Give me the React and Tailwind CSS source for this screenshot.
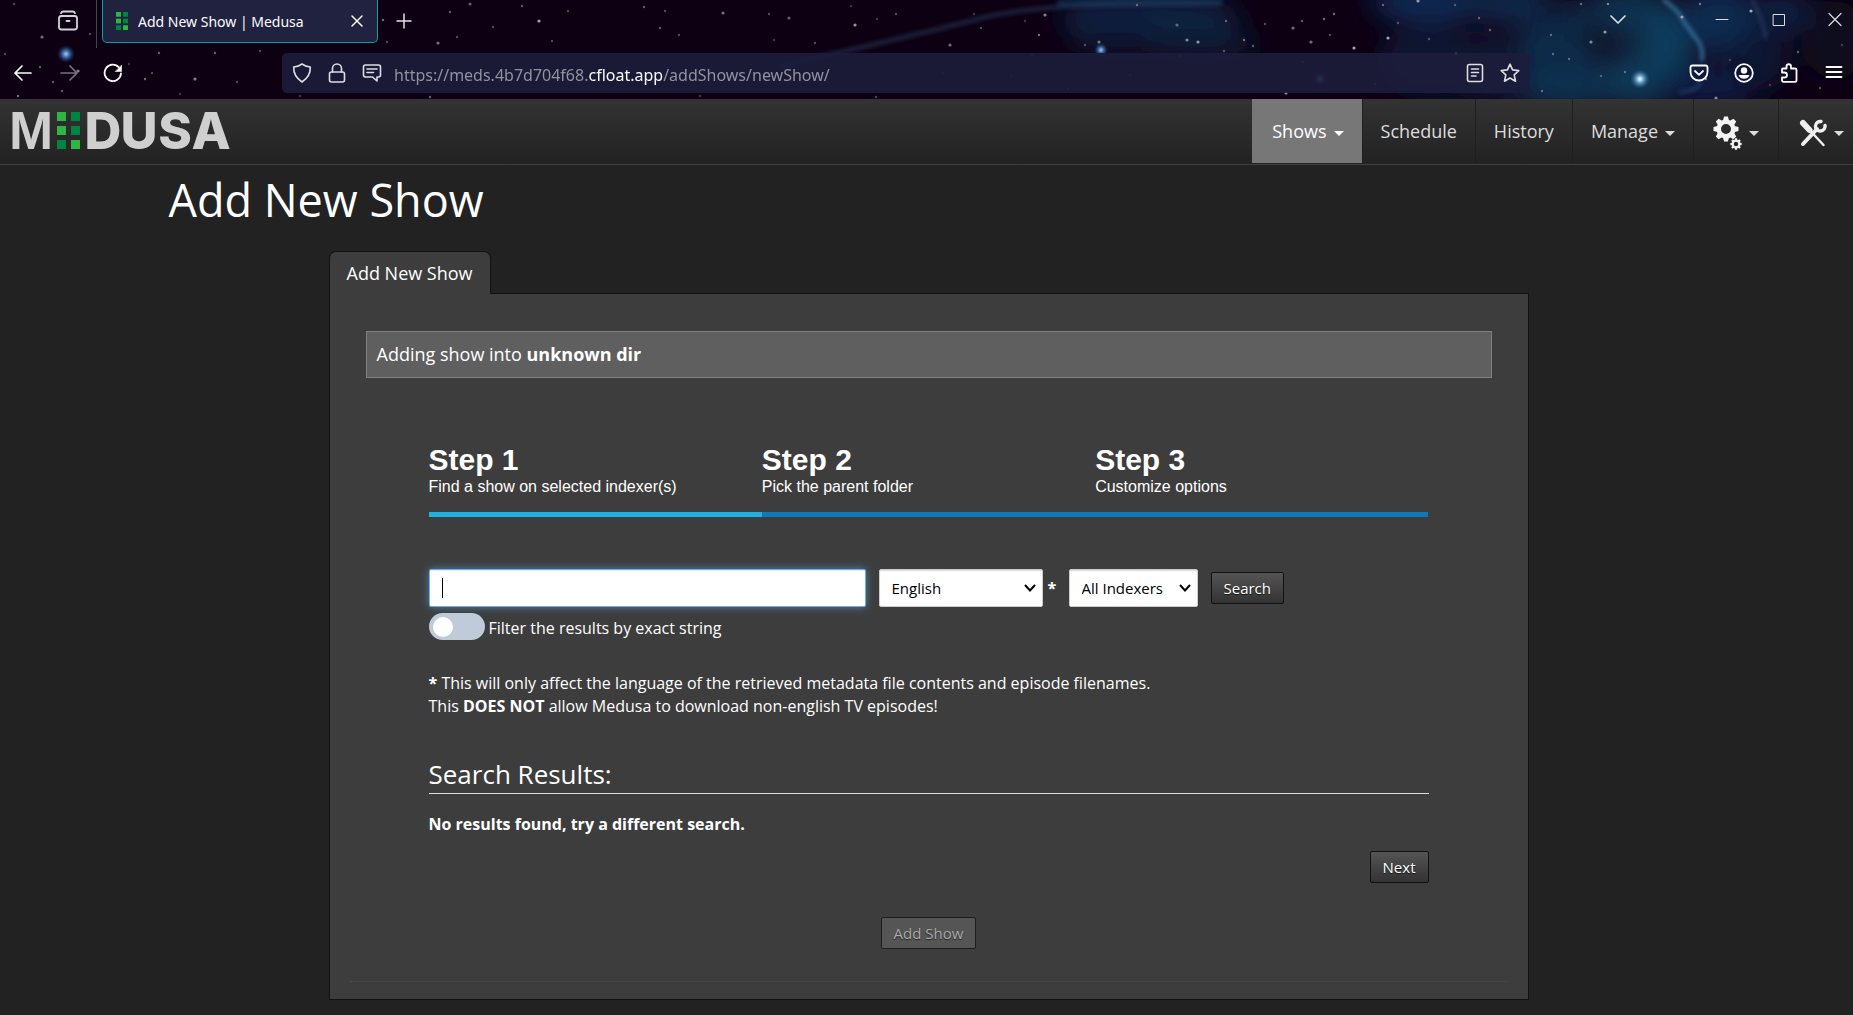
import React from "react";

const STARS = [
  [5, 54, 1, 0.4], [42, 37, 2, 0.6], [53, 82, 1, 0.5], [14, 4, 1, 0.4], [78, 71, 2, 0.7], [90, 34, 1, 0.4],
  [62, 91, 1, 0.5], [18, 96, 1, 0.6], [40, 67, 1, 0.5], [145, 79, 1, 0.6], [129, 64, 1, 0.3], [159, 53, 1, 0.5],
  [152, 73, 1, 0.4], [195, 79, 2, 0.7], [215, 53, 1, 0.5], [237, 82, 1, 0.4], [260, 51, 1, 0.4], [180, 94, 1, 0.3],
  [383, 20, 1, 0.6], [387, 42, 1, 0.4], [438, 43, 2, 0.6], [450, 12, 1, 0.5], [470, 4, 2, 0.5], [457, 37, 1, 0.4],
  [430, 97, 1, 0.5], [539, 21, 2, 0.9], [522, 6, 1, 0.5], [568, 11, 1, 0.4], [493, 27, 1, 0.4], [552, 41, 1, 0.4],
  [644, 7, 1, 0.5], [665, 11, 1, 0.4], [660, 28, 1, 0.5], [679, 35, 1, 0.4], [723, 13, 2, 0.6], [769, 14, 1, 0.4],
  [789, 18, 2, 0.5], [774, 40, 1, 0.3], [815, 43, 1, 0.4], [855, 25, 2, 0.8], [896, 14, 1, 0.4], [851, 6, 1, 0.3],
  [877, 19, 1, 0.3], [950, 45, 2, 0.6], [981, 28, 1, 0.4], [974, 14, 1, 0.3], [1025, 21, 1, 0.3], [1045, 15, 2, 0.7],
  [1039, 35, 1, 0.6], [1032, 55, 1, 0.4], [1085, 45, 1, 0.4], [1099, 42, 2, 0.6], [1137, 5, 1, 0.5], [1177, 25, 2, 0.5],
  [1187, 40, 2, 0.7], [1198, 42, 2, 0.8], [1226, 21, 1, 0.5], [1224, 51, 1, 0.4], [1011, 76, 1, 0.3], [1130, 75, 1, 0.4],
  [1068, 89, 1, 0.4], [943, 73, 1, 0.3], [1180, 56, 1, 0.4], [1244, 40, 1, 0.6], [1253, 46, 1, 0.5], [1265, 24, 1, 0.4],
  [1293, 28, 2, 0.6], [1302, 21, 1, 0.5], [1324, 19, 1, 0.6], [1334, 14, 1, 0.6], [1311, 42, 2, 0.6], [1330, 35, 1, 0.4],
  [1354, 48, 2, 0.9], [1388, 38, 2, 0.9], [1303, 62, 1, 0.5], [1286, 93, 2, 0.8], [1375, 84, 1, 0.6], [1383, 5, 1, 0.5],
  [1418, 1, 2, 0.8], [1456, 54, 2, 0.8], [1479, 18, 1, 0.5], [1490, 30, 1, 0.5], [1455, 5, 1, 0.4], [1398, 23, 1, 0.4],
  [1429, 39, 1, 0.4], [1551, 35, 1, 0.5], [1553, 54, 1, 0.5], [1569, 59, 1, 0.5], [1591, 42, 2, 0.7], [1605, 32, 2, 0.8],
  [1581, 4, 1, 0.5], [1608, 4, 1, 0.7], [1625, 72, 1, 0.5], [1542, 91, 1, 0.5], [1601, 76, 1, 0.4], [1682, 17, 2, 0.8],
  [1700, 4, 1, 0.6], [1751, 11, 2, 0.9], [1798, 52, 1, 0.5], [1706, 79, 1, 0.7], [1716, 98, 2, 0.7], [1730, 60, 1, 0.3],
  [1820, 88, 1, 0.4], [1842, 45, 1, 0.3], [1770, 85, 1, 0.3], [300, 96, 1, 0.3], [700, 96, 1, 0.3], [876, 97, 1, 0.4],
];

const CLOUDS = [
  [1150, 18, 90, 24, "#0d2140"], [1120, 40, 50, 14, "#0b1730"], [1200, 44, 60, 14, "#0b1a34"],
  [1430, 2, 60, 20, "#102c54"], [1430, 60, 50, 34, "#0d1530"], [1510, 4, 50, 18, "#0f2a4e"],
  [1500, 70, 60, 34, "#0c1630"], [1560, 50, 40, 50, "#0f2c4a"], [1570, 90, 50, 20, "#0e3050"],
  [1630, 14, 50, 26, "#0e3050"], [1640, 78, 40, 30, "#0f3854"], [1668, 45, 26, 36, "#103c5c"],
  [1720, 20, 40, 34, "#0e2a50"], [1780, 12, 34, 24, "#0d1c3c"], [1710, 86, 50, 20, "#101a44"],
  [1760, 60, 30, 30, "#0c1230"], [1594, 32, 16, 14, "#0b1228"], [1550, 12, 14, 12, "#0a1026"],
  [1835, 40, 30, 40, "#0d0a1e"],
];

function Nebula() {
  return (
    <svg className="absolute inset-0 h-full w-full" viewBox="0 0 1853 99" preserveAspectRatio="none" aria-hidden="true">
      <defs>
        <filter id="soft" x="-50%" y="-50%" width="200%" height="200%"><feGaussianBlur stdDeviation="13" /></filter>
        <filter id="wisp" x="-20%" y="-50%" width="140%" height="200%"><feGaussianBlur stdDeviation="2" /></filter>
        <radialGradient id="glow"><stop offset="0" stopColor="#fff" /><stop offset="0.25" stopColor="#8fc4e8" /><stop offset="1" stopColor="#1d5b86" stopOpacity="0" /></radialGradient>
        <radialGradient id="glowDim"><stop offset="0" stopColor="#a9c8f0" /><stop offset="0.3" stopColor="#4f7fbb" /><stop offset="1" stopColor="#123a70" stopOpacity="0" /></radialGradient>
      </defs>
      <rect width="1853" height="99" fill="#0e0013" />
      <g filter="url(#soft)">
        {CLOUDS.map(([x, y, rx, ry, fill]) => (
          <ellipse key={`${x}-${y}`} cx={x} cy={y} rx={rx} ry={ry} fill={fill} />
        ))}
      </g>
      <g filter="url(#wisp)" fill="none" strokeLinecap="round">
        <path d="M780 66 L850 50 L930 31 L990 16 Q1040 6 1110 5 L1220 4" stroke="#1f2f50" strokeWidth="4" opacity="0.8" />
        <path d="M1060 3 L1220 1" stroke="#173a62" strokeWidth="6" opacity="0.6" />
        <path d="M1664 0 Q1680 12 1684 22 L1695 37 Q1704 46 1702 60" stroke="#3f76a4" strokeWidth="3" />
        <path d="M1752 0 Q1762 16 1766 38" stroke="#3b4a6a" strokeWidth="3" opacity="0.6" />
        <path d="M1680 92 Q1700 90 1700 82" stroke="#33608c" strokeWidth="2" opacity="0.7" />
      </g>
      {STARS.map(([x, y, r, o]) => (
        <circle key={`${x}-${y}`} cx={x} cy={y} r={r === 2 ? 1.6 : 1.2} fill="#b9b3c6" opacity={o} />
      ))}
      <circle cx="66" cy="54" r="9" fill="url(#glowDim)" />
      <circle cx="1101" cy="50" r="7" fill="url(#glowDim)" />
      <circle cx="1320" cy="79" r="7" fill="url(#glowDim)" />
      <circle cx="1640" cy="79" r="10" fill="url(#glow)" />
    </svg>
  );
}

function Ico({ children, className = "h-5 w-5", box = "0 0 20 20", w = 1.6 }) {
  return (
    <svg className={`${className} shrink-0`} viewBox={box} fill="none" stroke="currentColor" strokeWidth={w} strokeLinecap="round" strokeLinejoin="round" aria-hidden="true">
      {children}
    </svg>
  );
}

function Squares({ className }) {
  return (
    <svg className={className} viewBox="0 0 24 38" preserveAspectRatio="none" aria-hidden="true">
      <rect x="0" y="0" width="10" height="10" fill="#2db742" />
      <rect x="14" y="0" width="10" height="10" fill="#008541" />
      <rect x="0" y="14" width="10" height="10" fill="#2db742" />
      <rect x="14" y="14" width="10" height="10" fill="#008541" />
      <rect x="0" y="28" width="10" height="10" fill="#008541" />
      <rect x="14" y="28" width="10" height="10" fill="#2db742" />
    </svg>
  );
}

function BrowserChrome() {
  return (
    <header className="relative h-[99px] overflow-hidden bg-[#0e0013] font-['Noto_Sans',sans-serif] text-[#fbfbfe]">
      <Nebula />
      <div className="relative flex h-12 items-start">
        <button aria-label="View recent browsing" className="ml-[57px] mt-[10px] text-[#d5d2d9]">
          <Ico className="h-[22px] w-[22px]" box="0 0 22 22" w={1.8}>
            <path d="M4 3.2 Q4.500 1.500 6.500 1.500 H15.500 Q17.500 1.500 18 3.200" />
            <rect x="2" y="6" width="18" height="13.500" rx="2.500" />
            <path d="M9.500 11 H12.500" />
          </Ico>
        </button>
        <div className="ml-[17px] h-12 w-px bg-[#4a4453]" />
        <div className="ml-[5px] flex h-[43px] w-[276px] items-center rounded-b-[5px] border border-t-0 border-[#00a3a3] bg-[#20223f] pl-[13px] pr-[10px]">
          <Squares className="h-[18px] w-3" />
          <span className="ml-[10px] flex-1 whitespace-nowrap text-[14px]">Add New Show | Medusa</span>
          <button aria-label="Close tab">
            <Ico className="h-5 w-5" w={1.5}><path d="M5 5 L15 15 M15 5 L5 15" /></Ico>
          </button>
        </div>
        <button aria-label="Open a new tab" className="ml-4 mt-[11px] text-[#e4e2e8]">
          <Ico w={1.5}><path d="M10 3 V17 M3 10 H17" /></Ico>
        </button>
        <div className="ml-auto flex items-center pt-[9px] text-[#dcdce4]">
          <button aria-label="List all tabs" className="mr-[84px]"><Ico w={1.7}><path d="M3 7 L10 14 L17 7" /></Ico></button>
          <button aria-label="Minimize" className="mr-[37px]"><Ico w={1}><path d="M4 10.500 H16" /></Ico></button>
          <button aria-label="Maximize" className="mr-9"><Ico w={1}><path d="M4.500 5.500 H15.500 V16.500 H4.500 Z" strokeLinejoin="miter" /></Ico></button>
          <button aria-label="Close window" className="mr-2"><Ico w={1.2}><path d="M4 4.500 L16 16.500 M16 4.500 L4 16.500" /></Ico></button>
        </div>
      </div>
      <div className="relative flex h-[51px] items-center pb-px">
        <div className="flex w-[282px] shrink-0 items-center pl-[13px]">
          <button aria-label="Back"><Ico w={1.7}><path d="M18 10 H2 M9 3 L2 10 L9 17" /></Ico></button>
          <button aria-label="Forward" disabled className="ml-[26px] text-[#777080]"><Ico w={1.7}><path d="M2 10 H18 M11 3 L18 10 L11 17" /></Ico></button>
          <button aria-label="Reload" className="ml-6">
            <Ico w={1.8}><path d="M16 4.500 A8.200 8.200 0 1 0 18 10.500" /><path d="M18.500 2.500 V8.500 H12.500 Z" fill="currentColor" strokeWidth="0.6" /></Ico>
          </button>
        </div>
        <div className="flex h-10 flex-1 items-center rounded-[5px] bg-[#1c1d3b]/90 px-[10px] text-[#dddde4]">
          <Ico className="mr-[15px] h-5 w-5"><path d="M10 1 Q13.500 3.500 18.300 4 Q18.800 13 10 19 Q1.200 13 1.700 4 Q6.500 3.500 10 1 Z" /></Ico>
          <Ico className="mr-[15px] h-5 w-5"><rect x="2.500" y="9" width="15" height="10" rx="2" /><path d="M5.500 9 V5.500 A4.500 4.500 0 0 1 14.500 5.500 V9" /></Ico>
          <Ico className="h-5 w-5"><path d="M3.500 2 H16.500 Q18.500 2 18.500 4 V12 Q18.500 14 16.500 14 H15 V18 L10.500 14 H3.500 Q1.500 14 1.500 12 V4 Q1.500 2 3.500 2 Z M5 6 H15 M5 9.500 H11.500" /></Ico>
          <div role="textbox" aria-label="Address" className="ml-3 flex-1 whitespace-nowrap pt-[3px] text-[16px] text-[#92929f]">
            https://meds.4b7d704f68.<span className="text-[#fbfbfe]">cfloat.app</span>/addShows/newShow/
          </div>
          <button aria-label="Toggle reader view" className="mr-[15px]">
            <Ico><rect x="2.500" y="1.500" width="15" height="17" rx="2" /><path d="M6.500 6 H13.500 M6.500 9.500 H13.500 M6.500 13 H11" /></Ico>
          </button>
          <button aria-label="Bookmark this page">
            <Ico><path d="M10 1.200 L12.600 6.900 L18.800 7.600 L14.200 11.800 L15.500 18.200 L10 15 L4.500 18.200 L5.800 11.800 L1.200 7.600 L7.400 6.900 Z" /></Ico>
          </button>
        </div>
        <div className="flex items-center gap-[25px] pl-[159px] pr-[9px]">
          <button aria-label="Save to Pocket"><Ico w={1.8}><path d="M3.500 2.500 H16.500 Q18.500 2.500 18.500 4.500 V9 A8.500 8.500 0 0 1 1.500 9 V4.500 Q1.500 2.500 3.500 2.500 Z M6 8 L10 11.800 L14 8" /></Ico></button>
          <button aria-label="Account">
            <Ico w={1.8}><circle cx="10" cy="10" r="8.800" /><circle cx="10" cy="7.500" r="3.200" fill="currentColor" stroke="none" /><path d="M4.500 12 H15.500 A5.600 4.500 0 0 1 4.500 12 Z" fill="currentColor" stroke="none" /></Ico>
          </button>
          <button aria-label="Extensions"><Ico w={1.8}><path d="M3 9 V6.500 Q3 5.500 4 5.500 H7.500 V3.500 A2.200 2.200 0 0 1 12 3.500 V5.500 H16 Q17.500 5.500 17.500 7 V17 Q17.500 18.800 16 18.800 H4.500 Q3 18.800 3 17.300 V14.500 H5.500 A2 2 0 0 0 5.500 9.500 H3 Z" /></Ico></button>
          <button aria-label="Open application menu"><Ico w={1.8}><path d="M2.500 4 H17.500 M2.500 9 H17.500 M2.500 14 H17.500" /></Ico></button>
        </div>
      </div>
    </header>
  );
}

function Caret() {
  return <span className="mt-1 inline-block border-x-[5px] border-t-[5px] border-x-transparent border-t-current" aria-hidden="true" />;
}

function NavItem({ children, caret, active, label, className }) {
  return (
    <a
      href="#"
      aria-label={label}
      className={`flex h-16 items-center whitespace-nowrap border-l text-[18px] ${className} ${active ? "border-[#777] bg-[#777] text-white" : "border-[#1f1f1f] text-[#ddd]"}`}
    >
      {children}
      {caret && <Caret />}
    </a>
  );
}

const TEETH = [0, 45, 90, 135, 180, 225, 270, 315];

function Gear({ cx, cy, r, hole, tooth }) {
  return (
    <g transform={`translate(${cx} ${cy})`}>
      {TEETH.map((a) => (
        <path key={a} transform={`rotate(${a})`} d={`M${-tooth} ${-r + 1} L${-tooth * 0.65} ${-r - tooth} H${tooth * 0.65} L${tooth} ${-r + 1} Z`} fill="#f4f4f4" />
      ))}
      <circle r={(r + hole) / 2} fill="none" stroke="#f4f4f4" strokeWidth={r - hole} />
    </g>
  );
}

function NavBar() {
  return (
    <nav className="flex h-[66px] items-start justify-between border-b border-[#41403a] bg-linear-to-b from-[#333] to-[#222]">
      <a href="#" aria-label="Medusa home" className="ml-[7px]">
        <svg className="h-16 w-[226px]" viewBox="-4 0 226 64" aria-hidden="true">
          <g fill="#cfcfcf" className="font-['Inter',sans-serif] font-extrabold" fontSize="51" textAnchor="middle">
            <text y="50" x="20" className="font-['Liberation_Sans',sans-serif] font-bold" fontSize="53">M</text>
            <text y="50" x="92">D</text>
            <text y="50" x="128">U</text>
            <text y="50" x="164">S</text>
            <text y="50" x="200">A</text>
          </g>
          <g transform="translate(46 13)">
            <rect width="9" height="9" fill="#2db742" />
            <rect x="14" width="9" height="9" fill="#008541" />
            <rect y="14" width="9" height="9" fill="#2db742" />
            <rect x="14" y="14" width="9" height="9" fill="#008541" />
            <rect y="28" width="9" height="9" fill="#008541" />
            <rect x="14" y="28" width="9" height="9" fill="#2db742" />
          </g>
        </svg>
      </a>
      <div className="flex">
        <NavItem active caret className="gap-[7px] pl-[19px] pr-[18px]">Shows</NavItem>
        <NavItem className="px-[18px]">Schedule</NavItem>
        <NavItem className="px-[18px]">History</NavItem>
        <NavItem caret className="gap-[7px] px-[18px]">Manage</NavItem>
        <NavItem caret label="Settings" className="gap-[6px] px-[19px]">
          <svg className="mt-1 h-9 w-[30px]" viewBox="0 0 30 36" aria-hidden="true">
            <Gear cx={13} cy={14} r={9.5} hole={5} tooth={3} />
            <Gear cx={23} cy={29} r={4.2} hole={2.2} tooth={1.5} />
          </svg>
        </NavItem>
        <NavItem caret label="Tools" className="gap-[7px] pl-5 pr-[9px]">
          <svg className="mt-1 h-7 w-7" viewBox="0 0 28 28" aria-hidden="true">
            <g fill="none" stroke="#f0f0f0" strokeLinecap="round">
              <path d="M4 4 L10.500 11" strokeWidth="6" />
              <path d="M11 11.500 L24.500 26" strokeWidth="2.400" />
              <path d="M4 25 L18 10" strokeWidth="4" />
              <path d="M22 2.500 A4.800 4.800 0 1 0 26 6.500" strokeWidth="3.400" />
            </g>
          </svg>
        </NavItem>
      </div>
    </nav>
  );
}

function Button({ children, disabled, className = "" }) {
  return (
    <button
      type="button"
      disabled={disabled}
      className={`h-8 rounded-[2px] border px-3 text-[15px] leading-[22px] ${className} ${disabled ? "border-[#1d1d1d] bg-[#555] text-[#aaa] [text-shadow:0_1px_1px_#222]" : "border-[#111] bg-linear-to-b from-[#555] to-[#333] text-white [text-shadow:0_1px_1px_#111]"}`}
    >
      {children}
    </button>
  );
}

function Select({ label, option, className }) {
  return (
    <div className={`relative ${className}`}>
      <select aria-label={label} className="h-[38px] w-full appearance-none rounded-[2px] border border-[#ccc] bg-white pl-3 text-[15px] text-black shadow-[inset_0_1px_1px_rgba(0,0,0,0.15)]">
        <option>{option}</option>
      </select>
      <svg className="pointer-events-none absolute right-[7px] top-[15px] h-2 w-3" viewBox="0 0 12 8" fill="none" stroke="#000" strokeWidth="2" aria-hidden="true">
        <path d="M1 1 L6 6.500 L11 1" />
      </svg>
    </div>
  );
}

const STEPS = [
  ["Step 1", "Find a show on selected indexer(s)", true],
  ["Step 2", "Pick the parent folder", false],
  ["Step 3", "Customize options", false],
];

export default function App() {
  return (
    <div className="min-h-screen bg-[#222] font-['Open_Sans',sans-serif] text-white">
      <BrowserChrome />
      <NavBar />
      <main className="pb-4 pl-1">
        <div className="mx-auto max-w-[1520px]">
          <h1 className="pt-2 text-[45px] leading-[54px]">Add New Show</h1>
          <div className="mx-auto mt-6 max-w-[1200px]">
            <div role="tablist" className="flex">
              <button role="tab" aria-selected="true" className="relative -mb-px h-[43px] rounded-t-[7px] border border-b-0 border-[#111] bg-[#3d3d3d] px-[17px] text-[18px]">
                Add New Show
              </button>
            </div>
            <section className="border border-[#111] bg-[#3d3d3d] px-5 pb-[17px]">
              <div className="border-b border-dotted border-[#4c4c4c] px-4 pb-8 pt-[37px]">
                <p className="border border-[#808080] bg-[#5f5f5f] px-[10px] py-[10px] text-[18px] leading-[25px]">
                  Adding show into <b>unknown dir</b>
                </p>
                <div className="mx-auto mt-[65px] max-w-[1000px]">
                  <ol className="flex font-['Liberation_Sans',sans-serif]">
                    {STEPS.map(([title, text, current]) => (
                      <li key={title} className={`flex-1 border-b-[5px] pb-[15px] ${current ? "border-[#23b0de]" : "border-[#1279b8]"}`}>
                        <div className="text-[30px] font-bold leading-[34px]">{title}</div>
                        <div className="text-[16px] leading-5">{text}</div>
                      </li>
                    ))}
                  </ol>
                  <div className="mt-[52px] flex items-center">
                    <div className="relative w-[437px]">
                      <input
                        aria-label="Show name"
                        type="text"
                        className="h-[38px] w-full rounded-[2px] border border-[#66afe9] bg-white px-3 text-[15px] text-black caret-transparent shadow-[inset_0_1px_1px_rgba(0,0,0,0.08),0_0_8px_rgba(102,175,233,0.6)] outline-none"
                      />
                      <span className="pointer-events-none absolute left-[13px] top-[9px] h-5 w-px bg-black" />
                    </div>
                    <Select label="Language" option="English" className="ml-[13px] w-[164px]" />
                    <b className="ml-[5px] w-[21px] text-[16px]">*</b>
                    <Select label="Indexer" option="All Indexers" className="w-[129px]" />
                    <Button className="ml-[13px]">Search</Button>
                  </div>
                  <label className="mt-[6px] flex h-[27px] w-fit items-center text-[16px]">
                    <input
                      type="checkbox"
                      className="mr-1 h-[27px] w-14 appearance-none rounded-full bg-[#bfcbd9] before:ml-1 before:mt-1 before:block before:h-5 before:w-5 before:rounded-full before:bg-white"
                    />
                    <span className="pt-[3px]">Filter the results by exact string</span>
                  </label>
                  <p className="mt-8 text-[16px] leading-[23px]">
                    <b>*</b> This will only affect the language of the retrieved metadata file contents and episode filenames.
                    <br />
                    This <b>DOES NOT</b> allow Medusa to download non-english TV episodes!
                  </p>
                  <h2 className="mt-[38px] border-b border-[#ddd] pb-px text-[26px] leading-9">Search Results:</h2>
                  <p className="mt-[19px] text-[16px] font-bold leading-[23px]">No results found, try a different search.</p>
                  <div className="mt-[15px] flex justify-end">
                    <Button>Next</Button>
                  </div>
                </div>
                <div className="mt-[34px] flex justify-center">
                  <Button disabled>Add Show</Button>
                </div>
              </div>
            </section>
          </div>
        </div>
      </main>
    </div>
  );
}
